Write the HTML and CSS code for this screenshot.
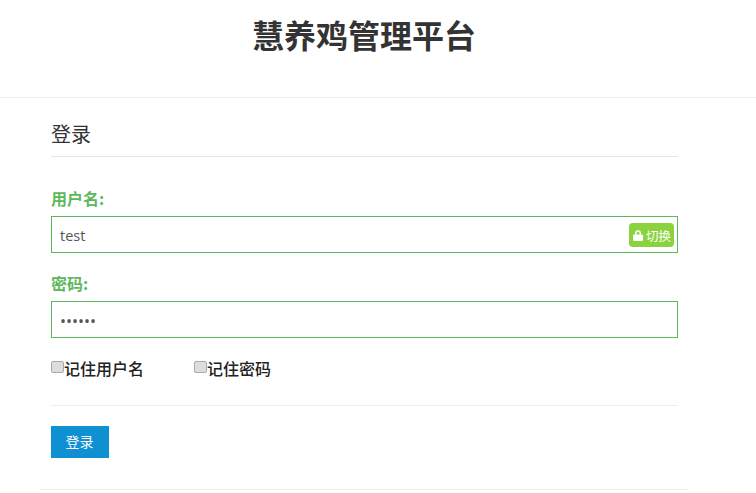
FILE: index.html
```html
<!DOCTYPE html>
<html lang="zh-CN">
<head>
<meta charset="utf-8">
<title>慧养鸡管理平台</title>
<link rel="stylesheet" href="styles.css">
</head>
<body>
<header class="site-header">
  <h1 class="site-title">慧养鸡管理平台</h1>
</header>
<main class="panel">
  <form class="login">
    <h2 class="login-title">登录</h2>
    <div class="field">
      <label class="field-label" for="user">用户名:</label>
      <div class="input-wrap">
        <input class="text-input" id="user" type="text" value="test">
        <span class="switch">
          <svg class="lock" viewBox="0 0 10 11" width="10" height="11" aria-hidden="true"><path d="M2 5V3.200a3 3 0 0 1 6 0V5H6.500V3.300a1.500 1.500 0 0 0-3 0V5z" fill="#fff"/><rect x="0" y="4.500" width="10" height="6.500" rx="1.200" fill="#fff"/></svg>切换
        </span>
      </div>
    </div>
    <div class="field">
      <label class="field-label" for="pass">密码:</label>
      <div class="input-wrap">
        <input class="text-input is-secret" id="pass" type="password" value="123456">
      </div>
    </div>
    <div class="remember">
      <label class="check"><input class="check-box" type="checkbox">记住用户名</label>
      <label class="check"><input class="check-box" type="checkbox">记住密码</label>
    </div>
    <div class="actions">
      <button class="submit" type="button">登录</button>
    </div>
  </form>
</main>
</body>
</html>
```
FILE: styles.css
```css
* { box-sizing: border-box; }
html, body { margin: 0; padding: 0; background: #fff; overflow: hidden; }
body {
  width: 756px;
  height: 493px;
  font-family: "Open Sans", "Noto Sans CJK SC", sans-serif;
  color: #333;
}
.site-header {
  height: 98px;
  border-bottom: 1px solid #eee;
  padding: 12px 28px 0 0;
}
.site-title {
  margin: 0;
  height: 44px;
  line-height: 44px;
  font-size: 32px;
  font-weight: 700;
  text-align: center;
  font-family: "Noto Sans CJK SC", sans-serif;
}
.panel {
  width: 648px;
  height: 392px;
  margin-left: 40px;
  padding: 0 10px 0 11px;
  border-bottom: 1px solid #eee;
}
.login { display: flex; flex-direction: column; width: 627px; }
.login-title {
  margin: 0;
  height: 59px;
  padding-top: 22px;
  line-height: 28px;
  font-size: 20px;
  font-weight: 400;
  color: #333;
  border-bottom: 1px solid #e5e5e5;
  font-family: "Noto Sans CJK SC", sans-serif;
}
.field { display: flex; flex-direction: column; }
.field:first-of-type { margin-top: 29px; }
.field + .field { margin-top: 18px; }
.field-label {
  height: 30px;
  line-height: 24px;
  font-size: 16px;
  font-weight: 700;
  color: #5cb85c;
  font-family: "Noto Sans CJK SC", sans-serif;
}
.input-wrap { position: relative; }
.text-input {
  display: block;
  width: 100%;
  height: 37px;
  padding: 2px 8px 0;
  border: 1px solid #5cb85c;
  border-radius: 0;
  background: #fff;
  outline: none;
  font-family: "Open Sans", sans-serif;
  font-size: 14.500px;
  color: #555;
}
.is-secret { font-size: 16px; letter-spacing: 0; }
.switch {
  position: absolute;
  top: 7px;
  right: 4px;
  display: flex;
  align-items: center;
  gap: 3px;
  width: 45px;
  height: 24px;
  padding-left: 4px;
  background: #8ad33f;
  border-radius: 4px;
  color: #fff;
  font-size: 12.500px;
  font-family: "Noto Sans CJK SC", sans-serif;
}
.lock { flex: none; }
.remember {
  display: flex;
  gap: 50px;
  margin-top: 18px;
  height: 29px;
}
.check {
  display: flex;
  align-items: center;
  height: 24px;
  font-size: 16px;
  font-weight: 500;
  color: #222;
  font-family: "Noto Sans CJK SC", sans-serif;
}
.check-box {
  appearance: none;
  flex: none;
  width: 13px;
  height: 12px;
  margin: 0 0 3px 0;
  border: 1px solid #aaa;
  border-radius: 2px;
  background: #ddd;
}
.actions {
  margin-top: 20px;
  padding-top: 20px;
  border-top: 1px solid #eee;
}
.submit {
  display: block;
  width: 58px;
  height: 32px;
  border: 0;
  padding: 0 1px 3px 0;
  background: #0e90d2;
  color: #fff;
  font-size: 14px;
  font-family: "Noto Sans CJK SC", sans-serif;
}
```
